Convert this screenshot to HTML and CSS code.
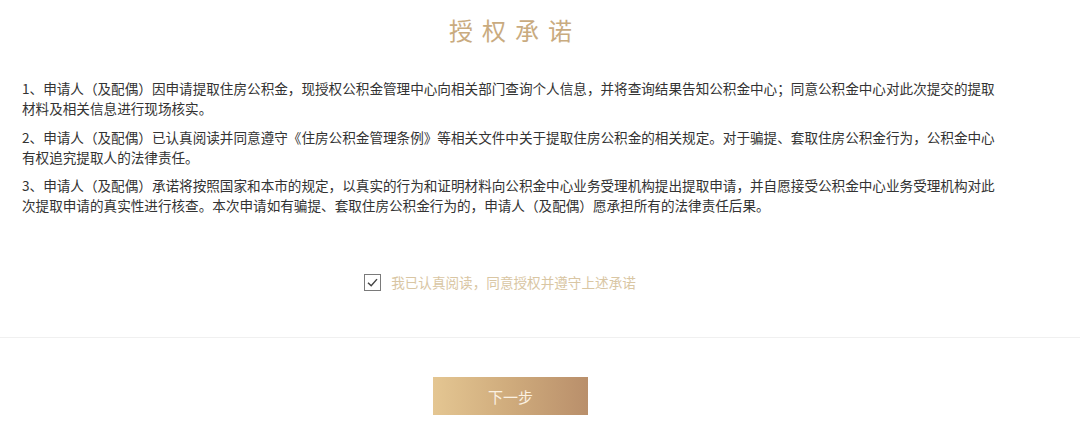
FILE: index.html
```html
<!DOCTYPE html>
<html lang="zh-CN">
<head>
<meta charset="utf-8">
<title>授权承诺</title>
<link rel="stylesheet" href="styles.css">
</head>
<body>
<div class="page">
  <h1 class="title">授权承诺</h1>
  <div class="content">
    <p>1、申请人（及配偶）因申请提取住房公积金，现授权公积金管理中心向相关部门查询个人信息，并将查询结果告知公积金中心；同意公积金中心对此次提交的提取材料及相关信息进行现场核实。</p>
    <p>2、申请人（及配偶）已认真阅读并同意遵守《住房公积金管理条例》等相关文件中关于提取住房公积金的相关规定。对于骗提、套取住房公积金行为，公积金中心有权追究提取人的法律责任。</p>
    <p>3、申请人（及配偶）承诺将按照国家和本市的规定，以真实的行为和证明材料向公积金中心业务受理机构提出提取申请，并自愿接受公积金中心业务受理机构对此次提取申请的真实性进行核查。本次申请如有骗提、套取住房公积金行为的，申请人（及配偶）愿承担所有的法律责任后果。</p>
  </div>
  <label class="agree">
    <span class="box">
      <svg viewBox="0 0 16 16" width="16" height="16"><path d="M3.2 8.2 L6.6 11.4 L12.8 4.4" fill="none" stroke="#444" stroke-width="1.6"/></svg>
    </span>
    <span class="agree-text">我已认真阅读，同意授权并遵守上述承诺</span>
  </label>
</div>
<div class="divider"></div>
<div class="page">
  <div class="actions">
    <button class="next">下一步</button>
  </div>
</div>
</body>
</html>
```
FILE: styles.css
```css
html, body {
  margin: 0;
  padding: 0;
  background: #ffffff;
}
body {
  font-family: "Noto Sans CJK SC", "Microsoft YaHei", sans-serif;
  color: #333333;
}
.page {
  width: 1021px;
}
.title {
  margin: 0;
  height: 60px;
  line-height: 60px;
  text-align: center;
  font-size: 24px;
  font-weight: normal;
  letter-spacing: 9px;
  padding-left: 9px;
  color: #c9ab7f;
}
.content {
  margin-top: 18px;
  padding: 0 22px;
}
.content p {
  margin: 0 0 8.5px;
  font-size: 13.6px;
  line-height: 20px;
}
.agree {
  display: flex;
  align-items: center;
  justify-content: center;
  gap: 10px;
  margin-top: 57px;
  height: 20px;
  padding-right: 21px;
}
.box {
  width: 15px;
  height: 15px;
  border: 1px solid #7a7a7a;
  display: flex;
  align-items: center;
  justify-content: center;
}
.box svg {
  width: 15px;
  height: 15px;
}
.agree-text {
  font-size: 13.6px;
  color: #d9c6a3;
}
.divider {
  margin-top: 45px;
  height: 1px;
  background: #f0f0f0;
}
.actions {
  display: flex;
  justify-content: center;
  padding-top: 39px;
}
.next {
  width: 155px;
  height: 38px;
  border: none;
  background: linear-gradient(90deg, #e4c692 0%, #cfab7c 50%, #b98f6b 100%);
  color: #fbf1e2;
  font-family: "Noto Sans CJK SC", sans-serif;
  font-size: 15px;
  padding: 0;
}
```
